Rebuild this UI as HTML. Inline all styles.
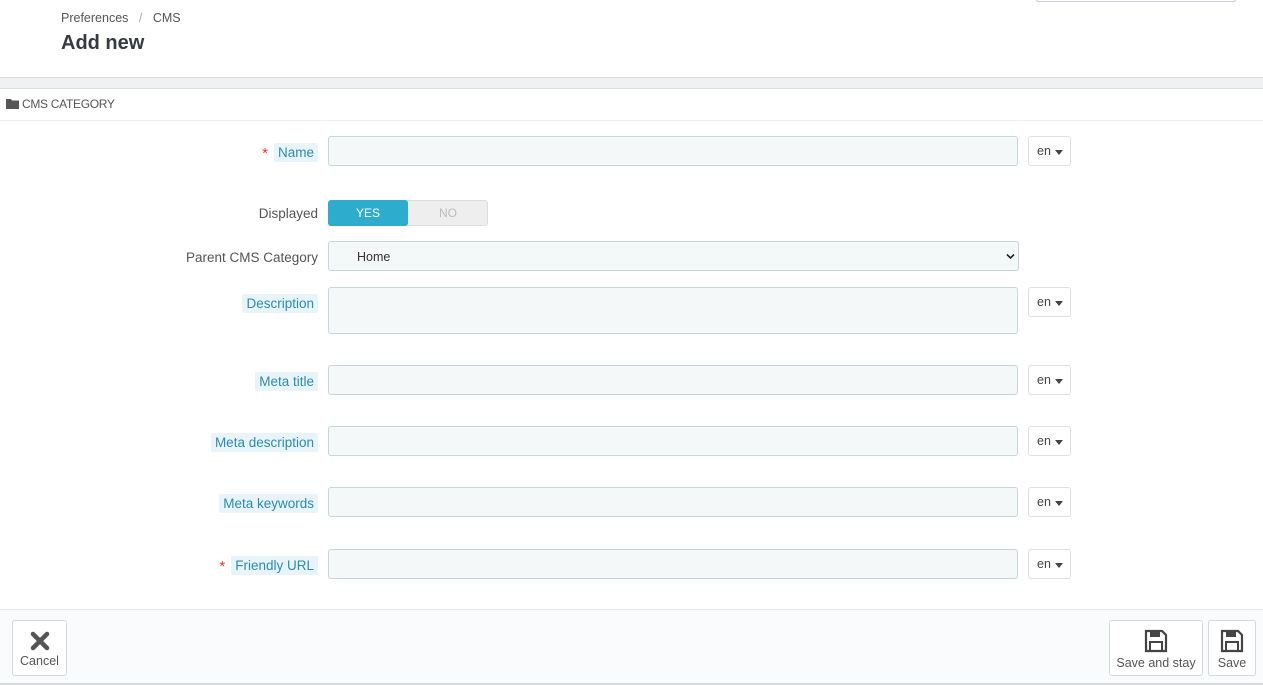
<!DOCTYPE html>
<html><head><meta charset="utf-8"><style>
*{box-sizing:border-box;margin:0;padding:0}
body{width:1263px;height:685px;background:#fff;font-family:"Liberation Sans",sans-serif;font-size:13px;color:#363a41;position:relative;overflow:hidden}
.a{position:absolute}
.inp{position:absolute;left:328px;width:690px;height:30px;background:#f5f8f9;border:1px solid #c7d6db;border-radius:3px}
.en{position:absolute;left:1028px;width:43px;height:30px;border:1px solid #dbe0e2;border-radius:3px;background:#fff;font-size:12.5px;color:#444;padding:7px 0 0 8px}
.en:after{content:"";position:absolute;left:26px;top:13px;border:4px solid transparent;border-top:5px solid #444;border-bottom:0}
.lbl{position:absolute;right:945px;font-size:13.5px;color:#555;white-space:nowrap}
.hl{background:#e8f4fa;color:#2b8bb0;padding:2px 4px;border-radius:2px}
.req{color:#e32;margin-right:6px;font-size:15px;position:relative;top:1px}
.btn{position:absolute;border:1px solid #d3d8db;border-radius:3px;background:#fff;text-align:center;font-size:12.5px;color:#555}
</style></head><body>
<div class="a" style="left:1036px;top:-2px;width:200px;height:4px;border:1px solid #ccd;border-radius:3px"></div>
<div class="a" style="left:61px;top:11px;font-size:12.5px;color:#555">Preferences <span style="color:#aaa;margin:0 7px">/</span> CMS</div>
<div class="a" style="left:61px;top:32px;font-size:20px;font-weight:bold;color:#363a41">Add new</div>
<div class="a" style="left:0;top:77px;width:1263px;height:12px;background:#eff1f2;border-top:1px solid #dcdfe1;border-bottom:1px solid #dcdfe1"></div>
<div class="a" style="left:0;top:120px;width:1263px;height:1px;background:#eceeef"></div>
<svg class="a" style="left:6px;top:98px" width="13" height="11" viewBox="0 0 13 11"><path d="M0 1h5l1 1.5h7V11H0z" fill="#555"/></svg>
<div class="a" style="left:22px;top:97px;font-size:12px;color:#555;letter-spacing:-0.3px">CMS CATEGORY</div>

<div class="lbl" style="top:144px"><span class="req">*</span><span class="hl">Name</span></div>
<div class="inp" style="top:136px"></div><div class="en" style="top:136px">en</div>

<div class="lbl" style="top:206px">Displayed</div>
<div class="a" style="left:328px;top:200px;width:160px;height:26px;background:#eee;border:1px solid #ddd;border-radius:3px"></div>
<div class="a" style="left:328px;top:200px;width:80px;height:26px;background:#2eacce;border-radius:3px;color:#fff;font-size:12px;text-align:center;padding-top:6px">YES</div>
<div class="a" style="left:408px;top:206px;width:80px;color:#bbb;font-size:12px;text-align:center">NO</div>

<div class="lbl" style="top:250px">Parent CMS Category</div>
<div class="inp" style="top:241px;width:691px;padding:8px 0 0 28px;font-size:12.5px;color:#333">Home
<svg class="a" style="left:677px;top:11px" width="9" height="7" viewBox="0 0 9 7"><path d="M1 1.5l3.5 3.5 3.5-3.5" stroke="#222" stroke-width="1.6" fill="none"/></svg></div>

<div class="lbl" style="top:296px"><span class="hl">Description</span></div>
<div class="inp" style="top:287px;height:47px"></div><div class="en" style="top:287px">en</div>

<div class="lbl" style="top:374px"><span class="hl">Meta title</span></div>
<div class="inp" style="top:365px"></div><div class="en" style="top:365px">en</div>
<div class="lbl" style="top:435px"><span class="hl">Meta description</span></div>
<div class="inp" style="top:426px"></div><div class="en" style="top:426px">en</div>
<div class="lbl" style="top:496px"><span class="hl">Meta keywords</span></div>
<div class="inp" style="top:487px"></div><div class="en" style="top:487px">en</div>
<div class="lbl" style="top:557px"><span class="req">*</span><span class="hl">Friendly URL</span></div>
<div class="inp" style="top:549px"></div><div class="en" style="top:549px">en</div>

<div class="a" style="left:0;top:609px;width:1263px;height:76px;background:#fafbfc;border-top:1px solid #e5e8ea;border-bottom:2px solid #d5d9dc"></div>
<div class="btn" style="left:12px;top:620px;width:55px;height:56px">
<svg style="margin-top:10px" width="20" height="20" viewBox="0 0 20 20"><path d="M3 3L17 17M17 3L3 17" stroke="#555" stroke-width="4.5" stroke-linecap="round"/></svg>
<div>Cancel</div></div>
<div class="btn" style="left:1109px;top:620px;width:94px;height:56px">
<svg style="margin-top:8px" width="24" height="24" viewBox="0 0 24 24"><path d="M2 2h16l4 4v16H2z" fill="none" stroke="#444" stroke-width="2.2"/><rect x="6" y="2" width="10" height="6" fill="#444"/><rect x="6" y="13" width="12" height="9" fill="none" stroke="#444" stroke-width="2"/></svg>
<div>Save and stay</div></div>
<div class="btn" style="left:1208px;top:620px;width:48px;height:56px">
<svg style="margin-top:8px" width="24" height="24" viewBox="0 0 24 24"><path d="M2 2h16l4 4v16H2z" fill="none" stroke="#444" stroke-width="2.2"/><rect x="6" y="2" width="10" height="6" fill="#444"/><rect x="6" y="13" width="12" height="9" fill="none" stroke="#444" stroke-width="2"/></svg>
<div>Save</div></div>
</body></html>
